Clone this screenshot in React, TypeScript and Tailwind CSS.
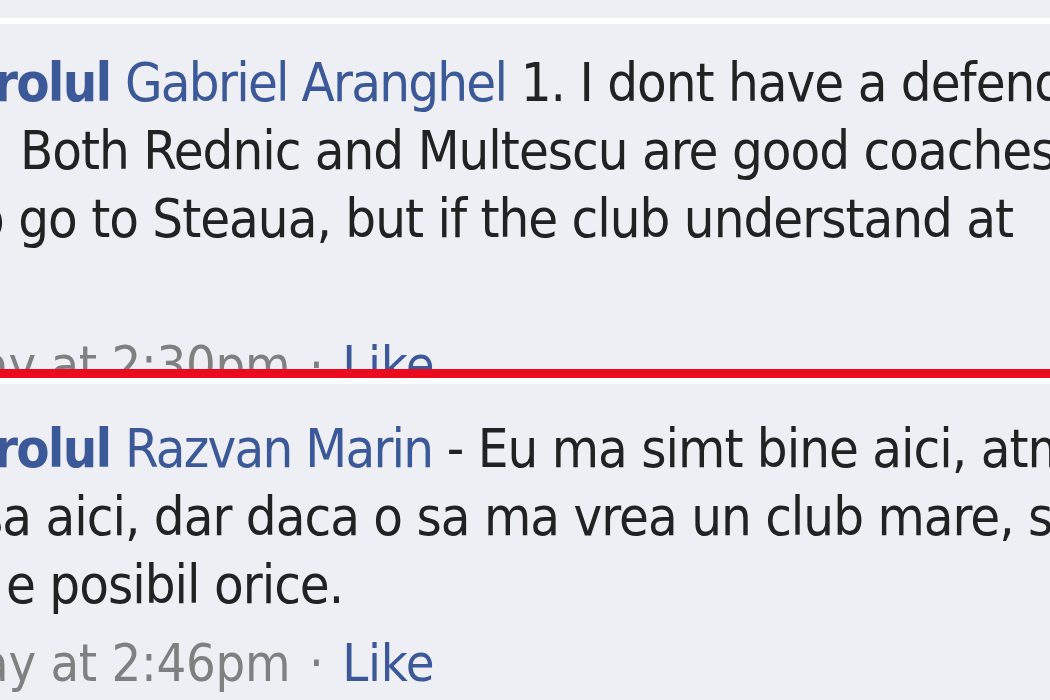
const font = "font-['DejaVu_Sans',sans-serif] font-stretch-condensed tracking-[-1px]";
const name = "text-[#3b5998] tracking-[-1.75px]";

function Line({ children, offset }: { children: React.ReactNode; offset: string }) {
  return <div className={`whitespace-nowrap ${offset}`}>{children}</div>;
}

function Meta({ time }: { time: string }) {
  return (
    <div className="mt-[10px] whitespace-nowrap ml-[-20px] text-[52px] tracking-[-0.25px] text-[#808080]">
      ay at {time} <span className="px-[4px]">·</span>{" "}
      <span className="text-[#3b5998]">Like</span>
    </div>
  );
}

export default function App() {
  return (
    <div
      className={`w-[1050px] h-[700px] overflow-hidden bg-[#edeff4] text-[54px] leading-[68px] text-[#222] ${font}`}
    >
      <div className="h-[18px]" />
      {/* first comment, cut off by the red marker */}
      <div className="h-[351px] overflow-hidden border-t-[6px] border-white pt-[25px]">
        <Line offset="ml-[-6px]">
          <span className={`font-bold ${name}`}>rolul</span>{" "}
          <span className={name}>Gabriel Aranghel</span> 1. I dont have a defender
        </Line>
        <Line offset="ml-[20px]">Both Rednic and Multescu are good coaches and</Line>
        <Line offset="ml-[-25px]">o go to Steaua, but if the club understand at</Line>
        <Line offset="ml-0">&nbsp;</Line>
        <Meta time="2:30pm" />
      </div>
      <div className="h-[9px] bg-[#ec0a1f]" />
      <div className="border-t-[6px] border-white pt-[31px]">
        <Line offset="ml-[-6px]">
          <span className={`font-bold ${name}`}>rolul</span>{" "}
          <span className={name}>Razvan Marin</span> - Eu ma simt bine aici, atmosfera
        </Line>
        <Line offset="ml-[-22px]">sa aici, dar daca o sa ma vrea un club mare, si</Line>
        <Line offset="ml-[6px]">e posibil orice.</Line>
        <Meta time="2:46pm" />
      </div>
    </div>
  );
}
